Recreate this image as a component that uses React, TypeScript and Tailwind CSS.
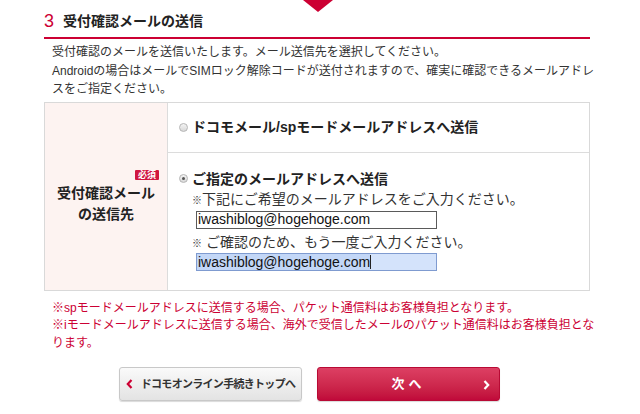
import React from 'react';

function Radio({ checked }: { checked?: boolean }) {
  return (
    <span className="flex h-[9px] w-[9px] shrink-0 items-center justify-center rounded-full border border-[#b5b5b5] bg-gradient-to-b from-[#f4f4f4] to-[#d8d8d8]">
      {checked && <span className="h-[3px] w-[3px] rounded-full bg-[#555]" />}
    </span>
  );
}

function Chevron({ dir, className }: { dir: 'left' | 'right'; className?: string }) {
  return (
    <svg width="7" height="10" viewBox="0 0 7 10" className={className}>
      {dir === 'left' ? (
        <path d="M5.5 1 L1.8 5 L5.5 9" fill="none" stroke="currentColor" strokeWidth="2.2" />
      ) : (
        <path d="M1.5 1 L5.2 5 L1.5 9" fill="none" stroke="currentColor" strokeWidth="2.2" />
      )}
    </svg>
  );
}

export default function App() {
  return (
    <div className="relative h-[414px] w-[640px] overflow-hidden bg-white font-['Liberation_Sans','Noto_Sans_CJK_JP',sans-serif] text-[#333]">
      {/* arrow from the previous step */}
      <div className="absolute left-[303px] top-0 h-0 w-0 border-l-[15px] border-r-[15px] border-t-[12px] border-l-transparent border-r-transparent border-t-[#cc0033]" />

      <div className="ml-[44px] w-[546px] pt-[11px]">
        <div className="box-content flex h-[20px] items-center border-b-2 border-[#cc0033] pb-[6px]">
          <span className="mr-[9px] text-[18px] leading-[20px] text-[#cc0033]">3</span>
          <span className="text-[14px] font-bold leading-[20px] text-[#222]">受付確認メールの送信</span>
        </div>

        <p className="whitespace-nowrap pl-[8px] pt-[4px] text-[12px] leading-[18.5px]">
          受付確認のメールを送信いたします。メール送信先を選択してください。
          <br />
          Androidの場合はメールでSIMロック解除コードが送付されますので、確実に確認できるメールアドレ
          <br />
          スをご指定ください。
        </p>

        <div className="mt-[3px] flex border border-[#d9d9d9]">
          <div className="flex w-[123px] shrink-0 flex-col items-center justify-center border-r border-[#dcdcdc] bg-[#fdf3f1] pt-[3px]">
            <span className="mr-[8px] self-end rounded-[1px] bg-[#d0163f] px-[3px] text-[9px] font-bold leading-[10px] text-white">
              必須
            </span>
            <div className="mt-[3px] text-center text-[14px] font-bold leading-[21px] text-[#222]">
              受付確認メール
              <br />
              の送信先
            </div>
          </div>

          <div className="flex-1">
            <div className="flex h-[50px] items-center gap-[4px] border-b border-[#dcdcdc] pl-[11px]">
              <Radio />
              <span className="text-[14px] font-bold leading-[20px] text-[#222]">
                ドコモメール/spモードメールアドレスへ送信
              </span>
            </div>

            <div className="pb-[19px] pl-[11px] pt-[16px]">
              <div className="flex items-center gap-[4px]">
                <Radio checked />
                <span className="text-[14px] font-bold leading-[20px] text-[#222]">ご指定のメールアドレスへ送信</span>
              </div>
              <div className="pl-[13px]">
                <div className="text-[14px] leading-[20px]">
                  <span className="text-[10px]">※</span>下記にご希望のメールアドレスをご入力ください。
                </div>
                <div className="ml-[4px] flex h-[18px] w-[241px] items-center border border-[#5a5a5a] bg-white pl-[1px] text-[14px] text-[#111]">
                  iwashiblog@hogehoge.com
                </div>
                <div className="mt-[4px] text-[14px] leading-[18px]">
                  <span className="text-[10px]">※</span> ご確認のため、もう一度ご入力ください。
                </div>
                <div className="ml-[4px] flex h-[18px] w-[241px] items-center border border-[#7f9bd0] bg-[#d4e3fb] text-[14px] text-[#111]">
                  <span className="bg-[#c3d7f7] pl-[1px] leading-[16px]">iwashiblog@hogehoge.com</span>
                  <span className="h-[14px] w-px bg-[#222]" />
                </div>
              </div>
            </div>
          </div>
        </div>

        <div className="whitespace-nowrap pl-[8px] pt-[9px] text-[12px] leading-[17.5px] text-[#cc0033]">
          ※spモードメールアドレスに送信する場合、パケット通信料はお客様負担となります。
          <br />
          ※iモードメールアドレスに送信する場合、海外で受信したメールのパケット通信料はお客様負担とな
          <br />
          ります。
        </div>
      </div>

      <div className="ml-[119px] mt-[15px] flex gap-[15px]">
        <button className="flex h-[34px] w-[183px] items-center justify-center gap-[8px] rounded-[3px] border border-[#c8c8c8] bg-gradient-to-b from-[#fafafa] to-[#e3e3e3] shadow-[0_1px_1px_rgba(0,0,0,0.15)]">
          <Chevron dir="left" className="text-[#cc0033]" />
          <span className="text-[11px] font-bold tracking-[-0.7px] text-[#333]">ドコモオンライン手続きトップへ</span>
        </button>
        <button className="relative flex h-[34px] w-[183px] items-center justify-center rounded-[3px] border border-[#b80a34] bg-gradient-to-b from-[#dd3f63] to-[#c0083a] shadow-[0_1px_1px_rgba(0,0,0,0.15)]">
          <span className="text-[13px] font-bold tracking-[4px] text-white">次へ</span>
          <Chevron dir="right" className="absolute right-[9px] top-[12px] text-white" />
        </button>
      </div>
    </div>
  );
}
